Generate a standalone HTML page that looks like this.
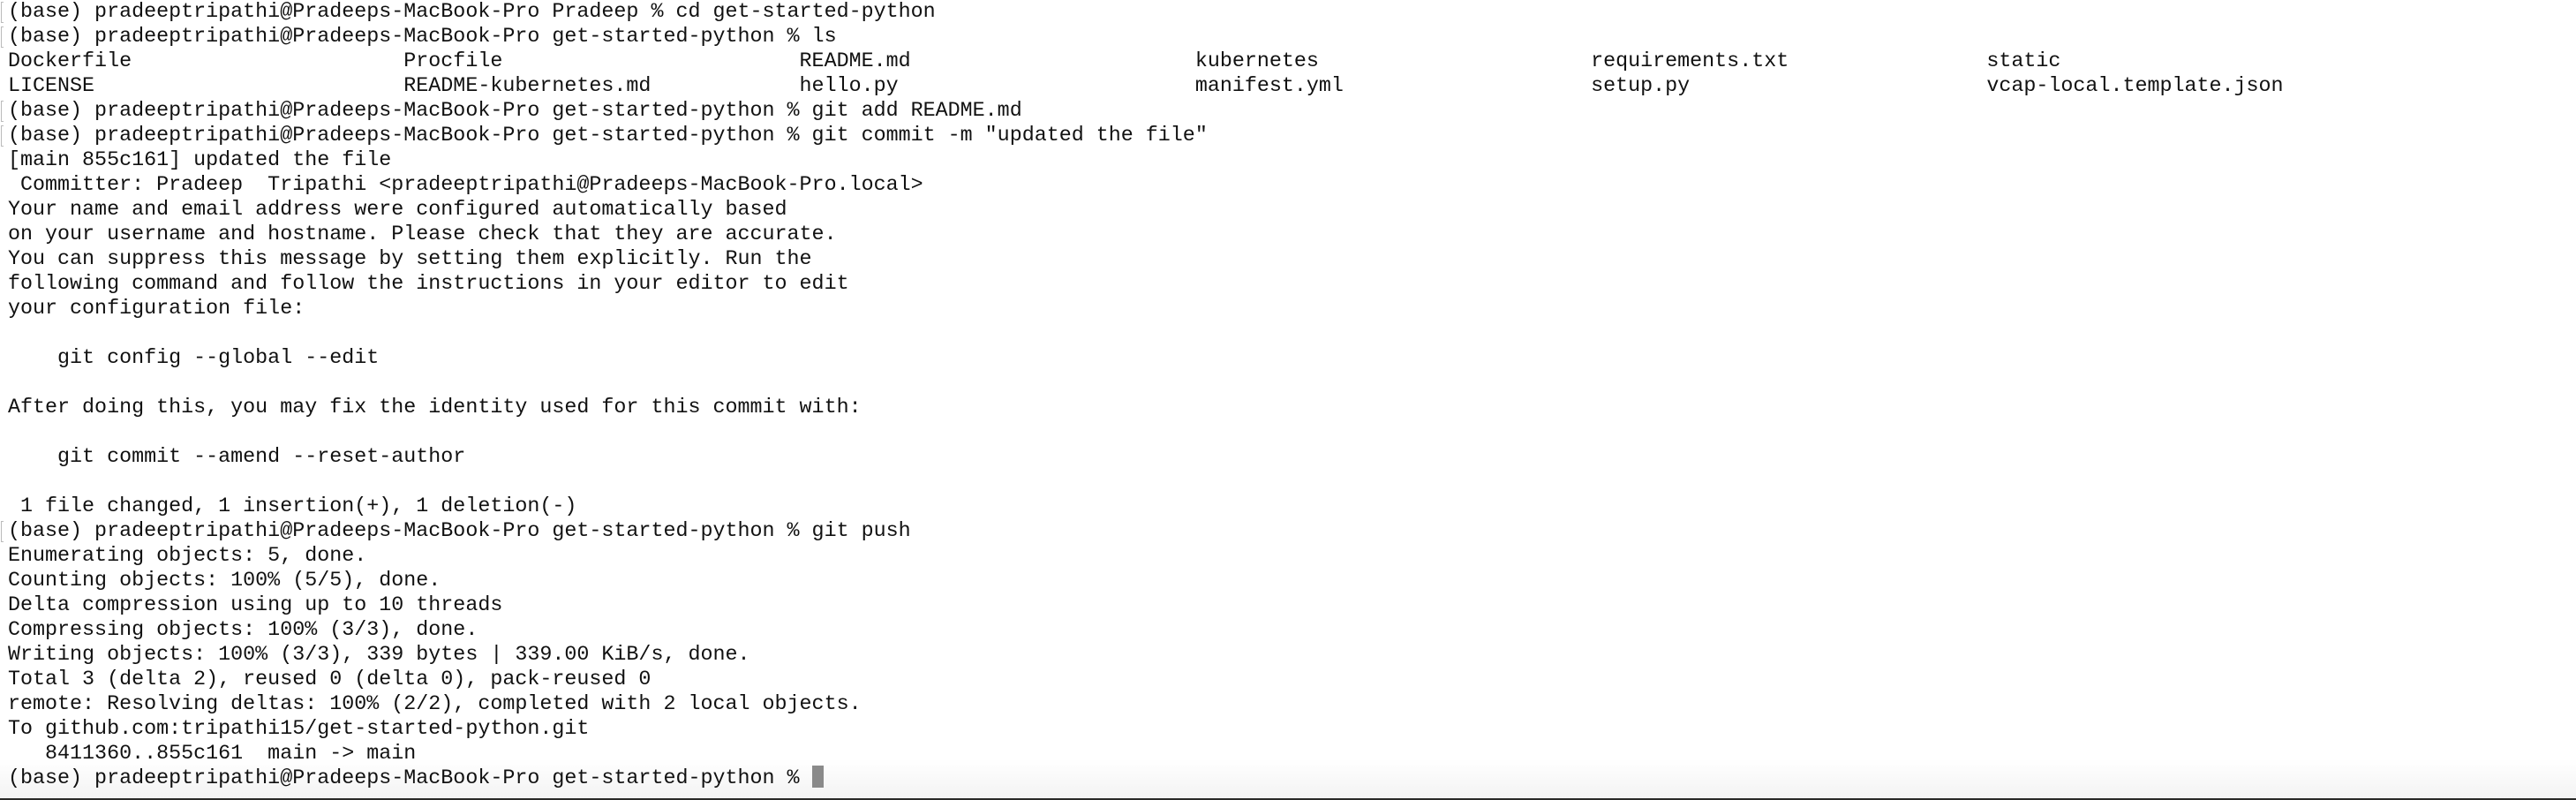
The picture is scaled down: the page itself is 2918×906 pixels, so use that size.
<!DOCTYPE html>
<html><head><meta charset="utf-8"><style>
html,body{margin:0;padding:0;background:#fff;width:2918px;height:906px;overflow:hidden;position:relative}
pre{position:absolute;left:9px;top:0px;margin:0;font-family:"Liberation Mono",monospace;font-size:23.35px;line-height:28px;color:#111;white-space:pre}
.br{position:absolute;left:1px;width:3px;height:24px;border:1.5px solid #bbb;border-right:none;box-sizing:border-box}
.cur{position:absolute;left:920px;top:867px;width:13px;height:25px;background:#8a8a8a}
.fade{position:absolute;left:0;right:0;top:860px;height:44px;background:linear-gradient(#fff,#f3f3f3)}
.bot{position:absolute;left:0;right:0;top:904px;height:2px;background:#2a2a28}
</style></head><body>
<div class="fade"></div>
<div class="bot"></div>
<div class="br" style="top:2px"></div>
<div class="br" style="top:30px"></div>
<div class="br" style="top:114px"></div>
<div class="br" style="top:142px"></div>
<div class="br" style="top:590px"></div>
<pre>(base) pradeeptripathi@Pradeeps-MacBook-Pro Pradeep % cd get-started-python
(base) pradeeptripathi@Pradeeps-MacBook-Pro get-started-python % ls
Dockerfile                      Procfile                        README.md                       kubernetes                      requirements.txt                static
LICENSE                         README-kubernetes.md            hello.py                        manifest.yml                    setup.py                        vcap-local.template.json
(base) pradeeptripathi@Pradeeps-MacBook-Pro get-started-python % git add README.md
(base) pradeeptripathi@Pradeeps-MacBook-Pro get-started-python % git commit -m "updated the file"
[main 855c161] updated the file
 Committer: Pradeep  Tripathi &lt;pradeeptripathi@Pradeeps-MacBook-Pro.local&gt;
Your name and email address were configured automatically based
on your username and hostname. Please check that they are accurate.
You can suppress this message by setting them explicitly. Run the
following command and follow the instructions in your editor to edit
your configuration file:

    git config --global --edit

After doing this, you may fix the identity used for this commit with:

    git commit --amend --reset-author

 1 file changed, 1 insertion(+), 1 deletion(-)
(base) pradeeptripathi@Pradeeps-MacBook-Pro get-started-python % git push
Enumerating objects: 5, done.
Counting objects: 100% (5/5), done.
Delta compression using up to 10 threads
Compressing objects: 100% (3/3), done.
Writing objects: 100% (3/3), 339 bytes | 339.00 KiB/s, done.
Total 3 (delta 2), reused 0 (delta 0), pack-reused 0
remote: Resolving deltas: 100% (2/2), completed with 2 local objects.
To github.com:tripathi15/get-started-python.git
   8411360..855c161  main -&gt; main
(base) pradeeptripathi@Pradeeps-MacBook-Pro get-started-python % </pre>
<div class="cur"></div>
</body></html>
